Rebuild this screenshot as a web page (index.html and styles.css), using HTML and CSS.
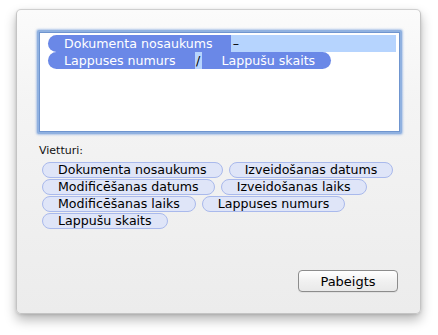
FILE: index.html
```html
<!DOCTYPE html>
<html>
<head>
<meta charset="utf-8">
<link rel="stylesheet" href="styles.css">
</head>
<body>
<div class="sheet">
  <div class="field">
    <div class="field-inner">
      <div class="line">
        <span class="tok tok-left">Dokumenta nosaukums</span><span class="sel sel-fill"><span class="dash">–</span></span>
      </div>
      <div class="line">
        <span class="tok tok-left tok-mid">Lappuses numurs</span><span class="sel sel-slash">/</span><span class="tok tok-right">Lappušu skaits</span>
      </div>
    </div>
  </div>
  <div class="label">Vietturi:</div>
  <div class="chips">
    <div class="chip-row"><span class="chip c1">Dokumenta nosaukums</span><span class="chip c2">Izveidošanas datums</span></div>
    <div class="chip-row"><span class="chip c3">Modificēšanas datums</span><span class="chip c4">Izveidošanas laiks</span></div>
    <div class="chip-row"><span class="chip c5">Modificēšanas laiks</span><span class="chip c6">Lappuses numurs</span></div>
    <div class="chip-row"><span class="chip c7">Lappušu skaits</span></div>
  </div>
  <div class="footer">
    <button class="btn">Pabeigts</button>
  </div>
</div>
</body>
</html>
```
FILE: styles.css
```css
html, body {
  margin: 0;
  padding: 0;
  background: #ffffff;
}
body {
  width: 438px;
  height: 335px;
  overflow: hidden;
  font-family: "DejaVu Sans", "Lucida Grande", sans-serif;
}
.sheet {
  box-sizing: border-box;
  margin: 9px 0 0 16px;
  width: 405px;
  height: 305px;
  border: 1px solid #c4c4c4;
  border-top-color: #cfcfcf;
  border-radius: 5px;
  background: linear-gradient(#fbfbfb 0%, #f4f4f4 30%, #ececec 100%);
  box-shadow: 0 6px 12px rgba(0,0,0,0.28), 0 1px 3px rgba(0,0,0,0.12);
  padding: 20px 0 0 20px;
  display: flex;
  flex-direction: column;
}
.field {
  box-sizing: border-box;
  width: 365px;
  height: 104px;
  padding: 2px;
  border-radius: 2px;
  background: #90b1e0;
  box-shadow: 0 0 2px 1px rgba(120,160,220,0.55);
}
.field-inner {
  box-sizing: border-box;
  height: 100%;
  background: #ffffff;
  border: 1px solid #6f95cf;
  padding: 2px 3px 0 8px;
}
.line {
  display: flex;
  height: 17px;
  font-size: 12.6px;
  line-height: 17px;
  color: #ffffff;
}
.tok {
  background: #6a88e7;
  padding: 0 18px 0 16px;
  white-space: nowrap;
}
.tok-left {
  border-radius: 9px 0 0 9px;
}
.tok-mid {
  padding-right: 19px;
}
.tok-right {
  border-radius: 0 9px 9px 0;
  padding: 0 16px 0 20px;
}
.sel {
  background: #b6d4fe;
  color: #000000;
}
.sel-fill {
  flex: 1;
  padding-left: 2px;
}
.sel-slash {
  width: 7px;
  text-align: center;
}
.label {
  margin: 10px 0 0 2px;
  font-size: 11px;
  line-height: 14px;
  color: #111111;
}
.chips {
  margin: 4px 0 0 5px;
  display: flex;
  flex-direction: column;
  gap: 1px;
}
.chip-row {
  display: flex;
  gap: 6px;
}
.chip {
  box-sizing: border-box;
  height: 16px;
  line-height: 14px;
  font-size: 12.6px;
  color: #000;
  background: #dfe5f8;
  border: 1px solid #a9b9ec;
  border-radius: 8px;
  padding: 0 15px;
  white-space: nowrap;
}
.footer {
  margin-top: auto;
  display: flex;
  justify-content: flex-end;
  padding: 0 22px 21px 0;
}
.btn {
  box-sizing: border-box;
  width: 100px;
  height: 22px;
  border: 1px solid #8c8c8c;
  border-radius: 4px;
  background: linear-gradient(#ffffff, #f1f1f1 50%, #e9e9e9);
  font-family: "DejaVu Sans", "Lucida Grande", sans-serif;
  font-size: 13px;
  color: #000;
  padding: 0;
  box-shadow: 0 1px 0 rgba(0,0,0,0.05);
}
```
